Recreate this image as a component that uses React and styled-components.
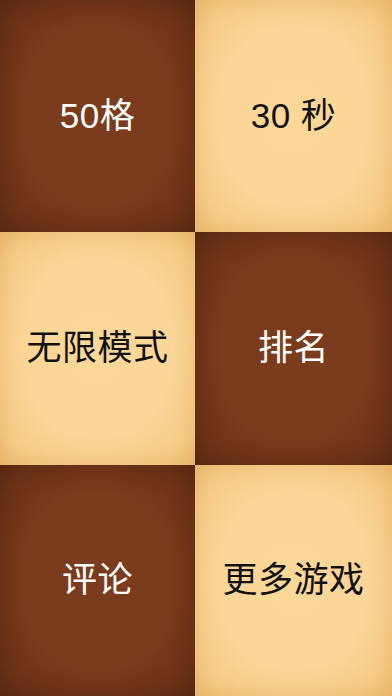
import React from 'react'
import styled, { createGlobalStyle } from 'styled-components'

const GlobalStyle = createGlobalStyle`
  html, body {
    margin: 0;
    padding: 0;
    height: 100%;
    overflow: hidden;
  }
  #root {
    height: 100%;
  }
`

const Board = styled.div`
  display: grid;
  grid-template-columns: 195px 197px;
  grid-template-rows: 232px 233px 231px;
  width: 392px;
  height: 696px;
  font-family: 'Liberation Sans', 'Noto Sans CJK SC', sans-serif;
`

const Tile = styled.button`
  display: flex;
  align-items: center;
  justify-content: center;
  border: 0;
  padding: 0 0 2px;
  margin: 0;
  font-family: inherit;
  font-size: 35px;
  font-weight: 400;
  line-height: 1;
  letter-spacing: 0.5px;
  cursor: pointer;
  color: ${p => (p.$dark ? '#ffffff' : '#111111')};
  background: ${p =>
    p.$dark
      ? 'radial-gradient(ellipse at center, #7b3c1e 0%, #7a3b1d 55%, #6c3218 85%, #5e2a13 100%)'
      : 'radial-gradient(ellipse at center, #fcd898 0%, #fbd697 55%, #f5cb86 85%, #ecbd72 100%)'};
  box-shadow: ${p =>
    p.$dark
      ? 'inset 0 0 22px rgba(70, 30, 10, 0.45)'
      : 'inset 0 0 22px rgba(226, 168, 92, 0.55)'};
`

const tiles = [
  { label: '50格', dark: true },
  { label: '30 秒', dark: false },
  { label: '无限模式', dark: false },
  { label: '排名', dark: true },
  { label: '评论', dark: true },
  { label: '更多游戏', dark: false },
]

const App = () => {
  return (
    <>
      <GlobalStyle />
      <Board>
        {tiles.map(t => (
          <Tile key={t.label} $dark={t.dark}>
            {t.label}
          </Tile>
        ))}
      </Board>
    </>
  )
}

export default App
